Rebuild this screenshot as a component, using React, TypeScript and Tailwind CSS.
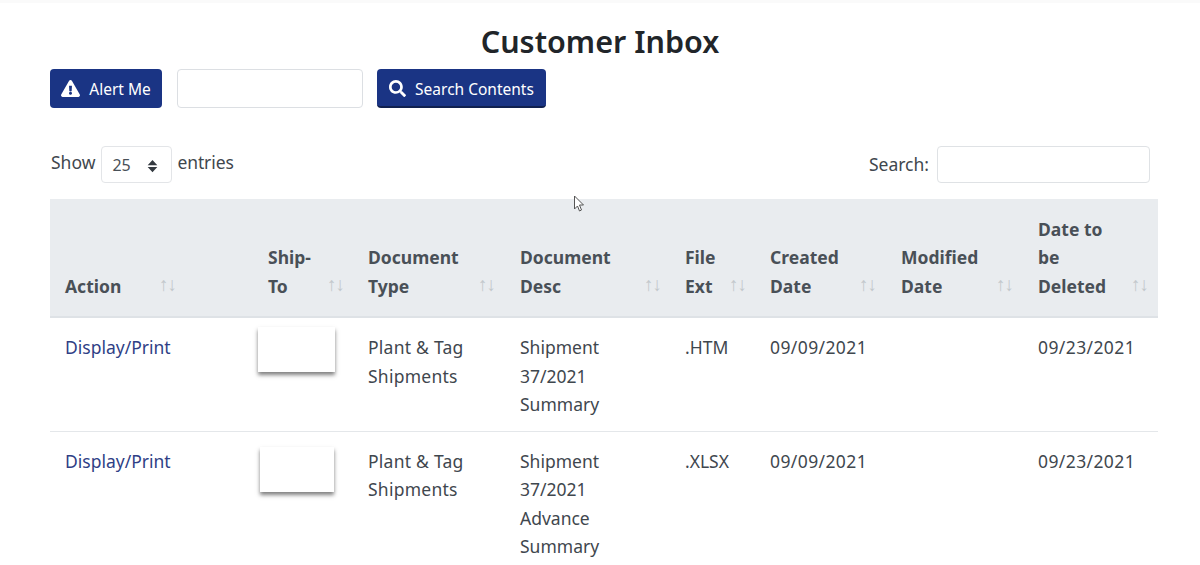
import { FaExclamationTriangle, FaSearch } from 'react-icons/fa'

const columns = [
  { width: 'w-[204px]', label: ['Action'], arrowGap: 'pr-[78px]', pad: 'pl-[15px]' },
  { width: 'w-[100px]', label: ['Ship-', 'To'], arrowGap: 'pr-[10px]', pad: 'pl-[14px]' },
  { width: 'w-[152px]', label: ['Document', 'Type'], arrowGap: 'pr-[11px]', pad: 'pl-[14px]' },
  { width: 'w-[165px]', label: ['Document', 'Desc'], arrowGap: 'pr-[10px]', pad: 'pl-[14px]' },
  { width: 'w-[85px]', label: ['File', 'Ext'], arrowGap: 'pr-[10px]', pad: 'pl-[14px]' },
  { width: 'w-[131px]', label: ['Created', 'Date'], arrowGap: 'pr-[11px]', pad: 'pl-[14px]' },
  { width: 'w-[137px]', label: ['Modified', 'Date'], arrowGap: 'pr-[11px]', pad: 'pl-[14px]' },
  { width: 'w-[134px]', label: ['Date to', 'be', 'Deleted'], arrowGap: 'pr-[10px]', pad: 'pl-[14px]' },
]

const rows = [
  { ext: '.HTM', desc: ['Shipment', '37/2021', 'Summary'], box: 'mt-[9px] w-[77px] ml-[-10px]' },
  { ext: '.XLSX', desc: ['Shipment', '37/2021', 'Advance', 'Summary'], box: 'mt-[15px] w-[74px] ml-[-8px]' },
]

function Lines({ lines }: { lines: string[] }) {
  return (
    <>
      {lines.map((line) => (
        <div key={line}>{line}</div>
      ))}
    </>
  )
}

export default function App() {
  return (
    <div className="relative h-[565px] w-[1200px] overflow-hidden bg-white font-['Noto_Sans','Open_Sans',sans-serif] text-[17.5px] leading-[28.5px] text-[#3f474e]">
      <div className="h-[3px] bg-[#fafafa]" />

      <div className="px-[50px]">
        <h1 className="mt-[18px] text-center text-[30.5px] leading-[40px] font-semibold text-[#212529]">Customer Inbox</h1>

        {/* Top actions */}
        <div className="mt-[8px] flex items-center">
          <button className="flex h-[39px] w-[112px] items-center justify-center gap-[9px] rounded-[4px] bg-[#1a3484] text-[15.5px] text-white">
            <FaExclamationTriangle className="h-[19px] w-[19px]" />
            <span className="pt-[1px]">Alert Me</span>
          </button>
          <input className="ml-[15px] h-[39px] w-[186px] rounded-[4px] border border-[#dcdfe3] bg-white" />
          <button className="ml-[14px] flex h-[39px] w-[169px] items-center justify-center gap-[9px] rounded-[4px] border-b-2 border-[#10204f] bg-[#1a3484] text-[15.5px] text-white">
            <FaSearch className="mt-[1px] h-[17px] w-[17px]" />
            <span className="pt-[3px]">Search Contents</span>
          </button>
        </div>

        {/* Length and filter */}
        <div className="mt-[38px] flex items-center justify-between">
          <div className="flex items-center">
            <span className="mt-[-5px] ml-[1px]">Show</span>
            <div className="ml-[6px] flex h-[37px] w-[71px] items-center justify-between rounded-[4px] border border-[#e3e5e8] pr-[13px] pl-[10px] text-[16px] text-[#495057]">
              <span className="mt-[2px]">25</span>
              <svg viewBox="0 0 12 16" className="mt-[2px] h-[14px] w-[11px] fill-[#343a40]">
                <path d="M6 1 11.5 7H.5zM6 15 .5 9h11z" />
              </svg>
            </div>
            <span className="mt-[-5px] ml-[5px] tracking-[-0.1px]">entries</span>
          </div>
          <div className="flex items-center">
            <span>Search:</span>
            <input className="ml-[8px] h-[37px] w-[213px] rounded-[4px] border border-[#dfe2e5] bg-white" />
          </div>
        </div>

        {/* Inbox table */}
        <table className="mt-[16px] w-[1108px] table-fixed border-collapse">
          <colgroup>
            {columns.map((col) => (
              <col key={col.label.join(' ')} className={col.width} />
            ))}
          </colgroup>
          <thead>
            <tr className="h-[118px] border-b-2 border-[#dee2e6] bg-[#e9ecef] font-bold text-[#495057]">
              {columns.map((col) => (
                <th key={col.label.join(' ')} className={`pt-0 pb-[16px] text-left align-bottom font-bold ${col.pad}`}>
                  <div className={`flex items-end justify-between ${col.arrowGap}`}>
                    <div className="whitespace-nowrap">
                      <Lines lines={col.label} />
                    </div>
                    <span className="mb-[2px] text-[19px] font-normal tracking-[-1px] whitespace-nowrap text-[#c3c8cc]">↑↓</span>
                  </div>
                </th>
              ))}
            </tr>
          </thead>
          <tbody>
            {rows.map((row) => (
              <tr key={row.ext} className="border-b border-[#e4e7ea] align-top">
                <td className="pt-[15px] pb-[12px] pl-[15px]">
                  <a className="text-[#2f3f86]">Display/Print</a>
                </td>
                <td className="pl-[14px]">
                  <div className={`h-[45px] bg-white shadow-[0_3px_4px_rgba(0,0,0,0.5)] ${row.box}`} />
                </td>
                <td className="pt-[15px] pb-[12px] pl-[14px] tracking-[0.25px]">
                  <Lines lines={['Plant & Tag', 'Shipments']} />
                </td>
                <td className="pt-[15px] pb-[12px] pl-[14px]">
                  <Lines lines={row.desc} />
                </td>
                <td className="pt-[15px] pb-[12px] pl-[14px]">{row.ext}</td>
                <td className="pt-[15px] pb-[12px] pl-[14px] tracking-[0.4px]">09/09/2021</td>
                <td className="pt-[15px] pb-[12px] pl-[14px]" />
                <td className="pt-[15px] pb-[12px] pl-[14px] tracking-[0.4px]">09/23/2021</td>
              </tr>
            ))}
          </tbody>
        </table>
      </div>

      {/* Mouse pointer from the capture */}
      <svg viewBox="0 0 12 18" className="absolute top-[195px] left-[573px] h-[18px] w-[12px] fill-white stroke-[#555]">
        <path d="M1.5 1v13l3-3 2 5 2-1-2-5h4z" />
      </svg>
    </div>
  )
}
